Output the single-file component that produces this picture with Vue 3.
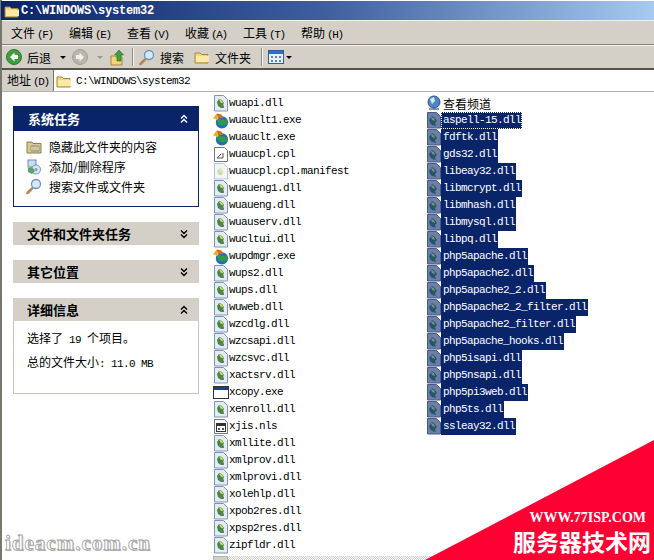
<script setup>
const menus = [
  ["文件", "(F)"],
  ["编辑", "(E)"],
  ["查看", "(V)"],
  ["收藏", "(A)"],
  ["工具", "(T)"],
  ["帮助", "(H)"],
];

const leftFiles = [
  ["wuapi.dll", "dll"],
  ["wuauclt1.exe", "update"],
  ["wuauclt.exe", "update"],
  ["wuaucpl.cpl", "cpl"],
  ["wuaucpl.cpl.manifest", "manifest"],
  ["wuaueng1.dll", "dll"],
  ["wuaueng.dll", "dll"],
  ["wuauserv.dll", "dll"],
  ["wucltui.dll", "dll"],
  ["wupdmgr.exe", "update"],
  ["wups2.dll", "dll"],
  ["wups.dll", "dll"],
  ["wuweb.dll", "dll"],
  ["wzcdlg.dll", "dll"],
  ["wzcsapi.dll", "dll"],
  ["wzcsvc.dll", "dll"],
  ["xactsrv.dll", "dll"],
  ["xcopy.exe", "exe"],
  ["xenroll.dll", "dll"],
  ["xjis.nls", "nls"],
  ["xmllite.dll", "dll"],
  ["xmlprov.dll", "dll"],
  ["xmlprovi.dll", "dll"],
  ["xolehlp.dll", "dll"],
  ["xpob2res.dll", "dll"],
  ["xpsp2res.dll", "dll"],
  ["zipfldr.dll", "dll"],
];

const selected = [
  "aspell-15.dll",
  "fdftk.dll",
  "gds32.dll",
  "libeay32.dll",
  "libmcrypt.dll",
  "libmhash.dll",
  "libmysql.dll",
  "libpq.dll",
  "php5apache.dll",
  "php5apache2.dll",
  "php5apache2_2.dll",
  "php5apache2_2_filter.dll",
  "php5apache2_filter.dll",
  "php5apache_hooks.dll",
  "php5isapi.dll",
  "php5nsapi.dll",
  "php5pi3web.dll",
  "php5ts.dll",
  "ssleay32.dll",
];
</script>

<template>
  <div class="window">
    <svg class="defs" width="0" height="0">
      <symbol id="folder" viewBox="0 0 16 16">
        <path d="M1 4h5l1.500 1.500H14v8.500H1z" fill="#f3d679" stroke="#a5873c" />
        <path d="M2 7h12l1-1v7H2z" fill="#fbe9a8" />
      </symbol>
      <symbol id="dll" viewBox="0 0 16 17">
        <path d="M1.500 .5h9l4 4v11.500h-13z" fill="#e3ebf5" stroke="#8096b0" />
        <path d="M4 7l2-3 3 1 2 3-1 2 1 3-3 0-3-2z" fill="#3b8a46" />
        <path d="M6 4.500l3 1 1.500 3-3-1z" fill="#e6d25a" />
        <path d="M6 10l4-1 1 3-3 1z" fill="#5f7f52" />
      </symbol>
      <symbol id="dll-sel" viewBox="0 0 16 17">
        <path d="M1.500 .5h9l4 4v11.500h-13z" fill="#6d7fa8" stroke="#47598a" />
        <path d="M3 8l3-4 3 2 2 3-2 2 1 3-4-1-2-2z" fill="#24566b" />
        <path d="M5 5l3 1 1 3-3-1z" fill="#7d8f7a" />
      </symbol>
      <symbol id="update" viewBox="0 0 17 17">
        <circle cx="9.500" cy="10.500" r="6.500" fill="#1f6fb5" />
        <path d="M4 8c3-2 7-1 11.500 1l-1 4c-3 1-6 1-9-1z" fill="#2f9a4e" />
        <path d="M0 6l4-5 4 2-3 5z" fill="#e8b22f" />
        <path d="M4 1l5 1 2 3.500-5 1z" fill="#c8702a" />
      </symbol>
    </svg>

    <div class="titlebar">
      <svg class="title-icon" width="16" height="16"><use href="#folder" /></svg>
      <span class="title-text">C:\WINDOWS\system32</span>
    </div>

    <div class="menubar">
      <span v-for="m in menus" :key="m[0]" class="menu-item">{{ m[0] }}<span class="hotkey">{{ m[1] }}</span></span>
    </div>

    <div class="toolbar">
      <div class="tool back">
        <svg width="16" height="16" viewBox="0 0 16 16">
          <circle cx="8" cy="8" r="7.500" fill="#3f9f3f" stroke="#2c7a2c" />
          <path d="M8.500 3.500L4 8l4.500 4.500V10H12V6H8.500z" fill="#fff" />
        </svg>
        <span class="tool-label">后退</span>
        <i class="caret"></i>
      </div>
      <div class="tool forward">
        <svg width="16" height="16" viewBox="0 0 16 16">
          <circle cx="8" cy="8" r="7.500" fill="#b9b6ae" stroke="#a09d96" />
          <path d="M7.500 3.500L12 8l-4.500 4.500V10H4V6h3.500z" fill="#efeeea" />
        </svg>
        <i class="caret pale"></i>
      </div>
      <svg class="up-icon" width="15" height="17" viewBox="0 0 15 17">
        <path d="M1 7h4l1 1h6v8H1z" fill="#f1d67c" stroke="#a5873c" />
        <path d="M7 12V6H4.500L9 1l4.500 5H11v6z" fill="#3f9f3f" stroke="#2c7a2c" stroke-width=".7" />
      </svg>
      <i class="sep"></i>
      <div class="tool search">
        <svg width="16" height="17" viewBox="0 0 16 17">
          <path d="M6 10.500L1.500 15" stroke="#b8874a" stroke-width="2.500" stroke-linecap="round" />
          <circle cx="10" cy="6" r="4.500" fill="#d5e8f8" stroke="#6d93bd" stroke-width="1.300" />
        </svg>
        <span class="tool-label">搜索</span>
      </div>
      <div class="tool folders">
        <svg width="16" height="16"><use href="#folder" /></svg>
        <span class="tool-label">文件夹</span>
      </div>
      <i class="sep"></i>
      <div class="tool views">
        <svg width="16" height="14" viewBox="0 0 16 14">
          <rect x=".5" y=".5" width="15" height="13" fill="#e7effa" stroke="#2f5f9e" />
          <rect x="1" y="1" width="14" height="3" fill="#2f6fc0" />
          <path d="M3 6h2v2H3zM7 6h2v2H7zM11 6h2v2h-2zM3 10h2v2H3zM7 10h2v2H7zM11 10h2v2h-2z" fill="#5a86bb" />
        </svg>
        <i class="caret small"></i>
      </div>
    </div>

    <div class="addressbar">
      <span class="address-label">地址<span class="hotkey">(D)</span></span>
      <div class="address-field">
        <svg width="16" height="16"><use href="#folder" /></svg>
        <span class="address-text">C:\WINDOWS\system32</span>
      </div>
    </div>

    <div class="content">
      <aside class="sidebar">
        <section class="card primary">
          <header class="card-head">
            <span>系统任务</span>
            <svg class="chev" width="10" height="10" viewBox="0 0 10 10">
              <path d="M2 4.500l3-3 3 3M2 8.500l3-3 3 3" fill="none" stroke="currentColor" stroke-width="1.400" />
            </svg>
          </header>
          <div class="card-body tasks">
            <div class="task">
              <svg width="16" height="17" viewBox="0 0 16 17">
                <path d="M1 4h5l1 1.500h8V15H1z" fill="#d8c98f" stroke="#8f7f50" />
                <path d="M5 8h8v5H5z" fill="#f6f1dc" stroke="#77735f" stroke-width=".7" />
                <path d="M7 8v5M9 8v5M11 8v5" stroke="#77735f" stroke-width=".7" />
              </svg>
              <span>隐藏此文件夹的内容</span>
            </div>
            <div class="task">
              <svg width="16" height="17" viewBox="0 0 16 17">
                <rect x="2" y="2" width="8" height="7" fill="#cbdcf0" stroke="#6d8fb8" />
                <circle cx="10" cy="11.500" r="4.500" fill="#d6e6f5" stroke="#6d93bd" />
                <path d="M2 10l4-1 3 4-3 3-4-2z" fill="#59a35e" />
                <circle cx="10" cy="11.500" r="1.500" fill="#7f9cc0" />
              </svg>
              <span>添加/删除程序</span>
            </div>
            <div class="task">
              <svg width="16" height="17" viewBox="0 0 16 17">
                <path d="M6 10.500L1.500 15" stroke="#b8874a" stroke-width="2.500" stroke-linecap="round" />
                <circle cx="10" cy="6" r="4.500" fill="#d5e8f8" stroke="#6d93bd" stroke-width="1.300" />
              </svg>
              <span>搜索文件或文件夹</span>
            </div>
          </div>
        </section>

        <section class="card closed">
          <header class="card-head">
            <span>文件和文件夹任务</span>
            <svg class="chev" width="10" height="10" viewBox="0 0 10 10">
              <path d="M2 1.500l3 3 3-3M2 5.500l3 3 3-3" fill="none" stroke="currentColor" stroke-width="1.400" />
            </svg>
          </header>
        </section>

        <section class="card closed">
          <header class="card-head">
            <span>其它位置</span>
            <svg class="chev" width="10" height="10" viewBox="0 0 10 10">
              <path d="M2 1.500l3 3 3-3M2 5.500l3 3 3-3" fill="none" stroke="currentColor" stroke-width="1.400" />
            </svg>
          </header>
        </section>

        <section class="card details">
          <header class="card-head">
            <span>详细信息</span>
            <svg class="chev" width="10" height="10" viewBox="0 0 10 10">
              <path d="M2 4.500l3-3 3 3M2 8.500l3-3 3 3" fill="none" stroke="currentColor" stroke-width="1.400" />
            </svg>
          </header>
          <div class="card-body info">
            <p>选择了<span class="latin count">19</span>个项目。</p>
            <p>总的文件大小<span class="latin">: 11.0 MB</span></p>
          </div>
        </section>
      </aside>

      <main class="files">
        <div class="file-col">
          <div v-for="f in leftFiles" :key="f[0]" class="file">
            <svg v-if="f[1] === 'dll'" class="file-icon" width="16" height="17"><use href="#dll" /></svg>
            <svg v-else-if="f[1] === 'update'" class="file-icon" width="16" height="17"><use href="#update" /></svg>
            <svg v-else-if="f[1] === 'cpl'" class="file-icon" width="16" height="17" viewBox="0 0 16 17">
              <path d="M1.500 1.500h10l3 3v11h-13z" fill="#fff" stroke="#70777f" />
              <path d="M4 12h6V7M4 12l4-4" fill="none" stroke="#555" />
            </svg>
            <svg v-else-if="f[1] === 'manifest'" class="file-icon" width="16" height="17" viewBox="0 0 16 17">
              <path d="M1.500 .5h9l4 4v11.500h-13z" fill="#f2f5f8" stroke="#b9c6d4" />
              <path d="M4 8l3-3 3 3-1 4-3 0z" fill="#c9dcae" />
              <path d="M6 6l3 1v2l-3-1z" fill="#e9e5b5" />
            </svg>
            <svg v-else-if="f[1] === 'exe'" class="file-icon" width="16" height="17" viewBox="0 0 16 17">
              <rect x=".5" y="2.500" width="15" height="12" fill="#fff" stroke="#333" />
              <rect x="1" y="3" width="14" height="3" fill="#1f3f7f" />
            </svg>
            <svg v-else class="file-icon" width="16" height="17" viewBox="0 0 16 17">
              <path d="M1.500 1.500h10l3 3v11h-13z" fill="#f8f8f8" stroke="#70777f" />
              <rect x="3.500" y="5.500" width="9" height="8" fill="#fff" stroke="#333" />
              <rect x="4" y="6" width="8" height="2" fill="#333" />
              <path d="M5 10h2v2H5zM9 10h2v2H9z" fill="#555" />
            </svg>
            <span class="file-name">{{ f[0] }}</span>
          </div>
        </div>
        <div class="file-col">
          <div class="file channel">
            <svg class="file-icon" width="16" height="17" viewBox="0 0 16 17">
              <circle cx="8" cy="7" r="6" fill="#4d86c6" stroke="#27558f" />
              <path d="M4 4l4-2 1 4-3 3z" fill="#d7e6f5" />
              <path d="M3 14h10M8 13v2" stroke="#6a7480" stroke-width="1.500" />
            </svg>
            <span class="channel-name">查看频道</span>
          </div>
          <div v-for="(name, i) in selected" :key="name" class="file" :class="{ focused: i === 0 }">
            <svg class="file-icon" width="16" height="17"><use href="#dll-sel" /></svg>
            <span class="file-name sel">{{ name }}</span>
          </div>
        </div>
        <div class="hscroll">
          <span class="hscroll-btn"></span>
          <span class="hscroll-track"></span>
        </div>
      </main>
    </div>

    <span class="stamp">ideacm.com.cn</span>
    <div class="corner"></div>
    <div class="corner-text">
      <span class="corner-url">WWW.77ISP.COM</span>
      <span class="corner-name">服务器技术网</span>
    </div>
  </div>
</template>

<style>
html,
body {
  margin: 0;
  background: #fff;
}
</style>

<style scoped>
.window {
  position: relative;
  width: 654px;
  height: 560px;
  overflow: hidden;
  display: flex;
  flex-direction: column;
  background: #fff;
  font-family: "Liberation Mono", "Noto Sans CJK SC", monospace;
  font-size: 12px;
  color: #000;
  box-shadow: inset 2px 0 0 #77776f;
}
.defs {
  position: absolute;
}
.titlebar {
  height: 19px;
  margin-top: 1px;
  margin-left: 1px;
  display: flex;
  align-items: center;
  padding-left: 3px;
  gap: 1px;
  background: linear-gradient(90deg, #0a246a 0%, #3f5f9f 50%, #a6caf0 100%);
  color: #fff;
}
.title-icon {
  flex: none;
}
.title-text {
  font-weight: bold;
  font-size: 12px;
  letter-spacing: -0.2px;
}
.menubar {
  height: 23px;
  margin-left: 2px;
  display: flex;
  align-items: center;
  padding-left: 9px;
  background: #d4d0c8;
  border-top: 1px solid #f4f2ee;
  border-bottom: 1px solid #85837c;
}
.menu-item {
  width: 58px;
  flex: none;
  font-family: "Noto Sans CJK SC", sans-serif;
}
.hotkey {
  font-family: "Liberation Mono", monospace;
  font-size: 11px;
  letter-spacing: -1.400px;
  margin-left: 2px;
}
.toolbar {
  height: 22px;
  margin-left: 2px;
  display: flex;
  align-items: center;
  padding-left: 4px;
  background: #d4d0c8;
  border-top: 1px solid #f4f2ee;
  border-bottom: 2px solid #55544f;
  font-family: "Noto Sans CJK SC", sans-serif;
}
.tool {
  display: flex;
  align-items: center;
  flex: none;
}
.tool-label {
  margin-left: 5px;
}
.caret {
  width: 0;
  height: 0;
  border-left: 3px solid transparent;
  border-right: 3px solid transparent;
  border-top: 3px solid #000;
  margin-left: 9px;
}
.caret.pale {
  border-top-color: #99968f;
}
.caret.small {
  margin-left: 2px;
}
.back {
  width: 66px;
}
.forward {
  width: 38px;
}
.up-icon {
  flex: none;
}
.sep {
  width: 1px;
  height: 18px;
  margin: 0 6px 0 7px;
  flex: none;
  background: #8f8d86;
  box-shadow: 1px 0 0 #f4f2ee;
}
.search {
  width: 55px;
}
.folders {
  width: 60px;
}
.addressbar {
  height: 21px;
  margin-left: 2px;
  display: flex;
  align-items: stretch;
  background: #d4d0c8;
  border-bottom: 1px solid #b5b3ad;
}
.address-label {
  width: 46px;
  padding-left: 5px;
  flex: none;
  line-height: 20px;
  font-family: "Noto Sans CJK SC", sans-serif;
}
.address-field {
  flex: 1;
  display: flex;
  align-items: center;
  gap: 4px;
  padding-left: 2px;
  background: #fff;
  border-left: 1px solid #77776f;
}
.address-text {
  font-size: 11px;
  letter-spacing: -0.6px;
}
.content {
  flex: 1;
  min-height: 0;
  display: flex;
  margin-left: 2px;
}
.sidebar {
  width: 211px;
  flex: none;
  box-sizing: border-box;
  padding: 14px 14px 0 11px;
  display: flex;
  flex-direction: column;
  gap: 15px;
  font-family: "Noto Sans CJK SC", sans-serif;
}
.card-head {
  height: 23px;
  display: flex;
  align-items: center;
  justify-content: space-between;
  padding: 0 10px 0 14px;
  background: #d4d0c8;
  font-size: 13px;
  font-weight: bold;
}
.chev {
  flex: none;
}
.primary .card-head {
  height: 25px;
  background: #0a246a;
  color: #fff;
  padding-left: 15px;
}
.card-body {
  box-sizing: border-box;
  background: #fff;
}
.tasks {
  height: 76px;
  padding: 5px 0 0 12px;
  border: 1px solid #0a246a;
  border-top: 0;
}
.task {
  height: 20px;
  display: flex;
  align-items: center;
  gap: 7px;
}
.details .card-body {
  height: 73px;
  padding: 8px 0 0 13px;
  border: 1px solid #c8c5be;
  border-top: 0;
}
.info p {
  margin: 0 0 6px;
  height: 18px;
  line-height: 18px;
}
.latin {
  font-family: "Liberation Mono", monospace;
  font-size: 11px;
  letter-spacing: -0.6px;
}
.count {
  margin: 0 6px;
}
.files {
  flex: 1;
  position: relative;
  display: flex;
  align-items: flex-start;
  padding-top: 3px;
  min-width: 0;
}
.file-col {
  width: 213px;
  flex: none;
}
.file {
  height: 17px;
  display: flex;
  align-items: center;
}
.file-icon {
  width: 16px;
  height: 17px;
  flex: none;
  margin-right: -1px;
}
.file-name {
  padding: 0 1px 0 1px;
  line-height: 17px;
  font-size: 11px;
  letter-spacing: -0.6px;
  white-space: nowrap;
}
.file-name.sel {
  padding: 0 1px 0 2px;
  background: #0a246a;
  color: #fff;
}
.focused .file-name {
  outline: 1px dotted #fff;
  outline-offset: -1px;
}
.channel-name {
  margin-left: 2px;
  font-family: "Noto Sans CJK SC", sans-serif;
}
.hscroll {
  position: absolute;
  left: 0;
  right: 0;
  bottom: 0;
  height: 4px;
  display: flex;
}
.hscroll-btn {
  width: 15px;
  flex: none;
  background: #d4d0c8;
  border: 1px solid #b5b3ad;
  border-bottom: 0;
  box-sizing: border-box;
}
.hscroll-track {
  flex: 1;
  background: repeating-conic-gradient(#d4d0c8 0 25%, #fff 0 50%) 0 0 / 2px 2px;
}
.stamp {
  position: absolute;
  left: 5px;
  top: 531px;
  font-family: "Liberation Serif", serif;
  font-weight: bold;
  font-size: 21px;
  letter-spacing: 1px;
  color: #fff;
  -webkit-text-stroke: 0.8px #a0a0a0;
  text-shadow: 1px 1px 0 #c4c4c4;
}
.corner {
  position: absolute;
  right: 0;
  bottom: 0;
  width: 229px;
  height: 120px;
  background: #ff0033;
  clip-path: polygon(100% 0, 100% 100%, 0 100%);
}
.corner-text {
  position: absolute;
  right: 3px;
  bottom: 4px;
  display: flex;
  flex-direction: column;
  align-items: flex-end;
  color: #fff;
  font-weight: bold;
}
.corner-url {
  margin-right: 5px;
  font-family: "Liberation Serif", serif;
  font-size: 14px;
  line-height: 17px;
}
.corner-name {
  font-family: "Noto Sans CJK SC", sans-serif;
  font-size: 23px;
  line-height: 30px;
}
</style>
